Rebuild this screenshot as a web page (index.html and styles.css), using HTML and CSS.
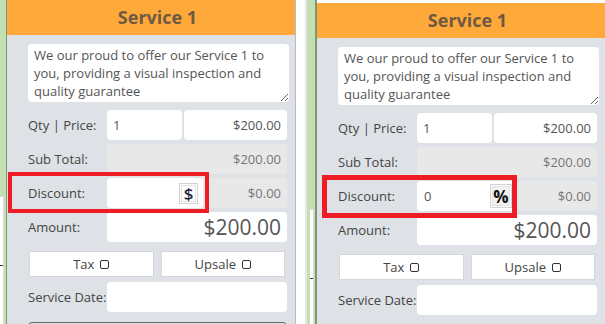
FILE: index.html
```html
<!DOCTYPE html>
<html lang="en">
<head>
  <meta charset="UTF-8" />
  <meta name="viewport" content="width=device-width, initial-scale=1.0"/>
  <title>Service 1 - Discount</title>
  <link rel="stylesheet" href="styles.css">
</head>
<body>
  <div class="shots">

    <section class="shot shot-a">
      <div class="edge">
        <div class="edge-box"><span class="tick"></span></div>
      </div>
      <div class="card">
        <div class="card-head">Service 1</div>
        <textarea class="desc">We our proud to offer our Service 1 to you, providing a visual inspection and quality guarantee</textarea>

        <div class="row first">
          <label>Qty | Price:</label>
          <div class="pair">
            <input class="field" type="text" value="1">
            <input class="field right" type="text" value="$200.00">
          </div>
        </div>
        <div class="row">
          <label>Sub Total:</label>
          <input class="field right" type="text" value="$200.00" disabled>
        </div>
        <div class="row">
          <label>Discount:</label>
          <div class="discount">
            <div class="disc-input">
              <input type="text" value="">
              <button class="unit">$</button>
            </div>
            <div class="disc-value">$0.00</div>
          </div>
        </div>
        <div class="row">
          <label>Amount:</label>
          <input class="field right big" type="text" value="$200.00">
        </div>

        <div class="toggles">
          <div class="toggle">Tax <span class="box"></span></div>
          <div class="toggle">Upsale <span class="box"></span></div>
        </div>

        <div class="row date">
          <label>Service Date:</label>
          <input class="field" type="text" value="">
        </div>
        <div class="next"></div>

        <div class="mark mark-a"></div>
      </div>
      <div class="gutter"></div>
    </section>

    <section class="shot shot-b">
      <div class="edge">
        <div class="edge-box"><span class="tick"></span></div>
      </div>
      <div class="card">
        <div class="card-head">Service 1</div>
        <textarea class="desc">We our proud to offer our Service 1 to you, providing a visual inspection and quality guarantee</textarea>

        <div class="row first">
          <label>Qty | Price:</label>
          <div class="pair">
            <input class="field" type="text" value="1">
            <input class="field right" type="text" value="$200.00">
          </div>
        </div>
        <div class="row">
          <label>Sub Total:</label>
          <input class="field right" type="text" value="$200.00" disabled>
        </div>
        <div class="row">
          <label>Discount:</label>
          <div class="discount">
            <div class="disc-input">
              <input type="text" value="0">
              <button class="unit pct">%</button>
            </div>
            <div class="disc-value">$0.00</div>
          </div>
        </div>
        <div class="row">
          <label>Amount:</label>
          <input class="field right big" type="text" value="$200.00">
        </div>

        <div class="toggles">
          <div class="toggle">Tax <span class="box"></span></div>
          <div class="toggle">Upsale <span class="box"></span></div>
        </div>

        <div class="row date">
          <label>Service Date:</label>
          <input class="field" type="text" value="">
        </div>
        <div class="next"></div>

        <div class="mark mark-b"></div>
      </div>
    </section>

  </div>
</body>
</html>
```

FILE: styles.css
```css
body {
  margin: 0;
  background: #fff;
  font-family: 'Open Sans', 'Noto Sans', sans-serif;
  font-size: 13px;
  color: #444;
  overflow: hidden;
}

.shots {
  display: flex;
  height: 324px;
  overflow: hidden;
}

.shot {
  display: flex;
  flex-shrink: 0;
  height: 324px;
}

/* green page edge on the left of each capture */
.edge {
  display: flex;
  flex-direction: column;
  justify-content: flex-end;
  background: #c4e0b2;
}

.shot-a .edge {
  width: 6px;
  border-right: 1px solid #7d9875;
}

.shot-b .edge {
  width: 8px;
  border-left: 2px solid #e4e6e8;
  border-right: 2px solid #7d9875;
}

.edge-box {
  position: relative;
  height: 127px;
  width: 3px;
  background: #fff;
  border-top: 1px solid #dcdcdc;
  border-right: 1px solid #dcdcdc;
}

.shot-b .edge-box {
  height: 114px;
  margin-left: 3px;
}

.tick {
  position: absolute;
  left: 0;
  top: 68px;
  width: 3px;
  height: 1px;
  background: #333;
}

.gutter {
  width: 9px;
  background: #fff;
}

.card {
  position: relative;
  width: 259px;
  padding: 0 8px 0 21px;
  background: #dee2e6;
  border-right: 1px solid #b8bcc0;
}

.shot-b .card {
  margin-top: 3px;
  border-right: none;
}

.card-head {
  margin: 0 -8px 0 -21px;
  padding: 0 8px 0 21px;
  height: 35px;
  line-height: 35px;
  background: #ffa93b;
  color: #6e5a42;
  font-size: 18px;
  font-weight: 700;
  text-align: center;
}

.desc {
  display: block;
  box-sizing: border-box;
  width: 261px;
  height: 58px;
  margin-top: 9px;
  padding: 2px 6px;
  border: none;
  border-radius: 4px;
  background: #fff;
  font-family: inherit;
  font-size: 13px;
  line-height: 18px;
  color: #555;
  resize: vertical;
  overflow: hidden;
}

.row {
  display: grid;
  grid-template-columns: 79px 1fr;
  align-items: center;
  height: 30px;
  margin-top: 4px;
}

.row.first {
  margin-top: 8px;
}

.row.date {
  margin-top: 5px;
}

.row label {
  color: #444;
  white-space: nowrap;
}

.pair {
  display: grid;
  grid-template-columns: 75px 1fr;
  gap: 2px;
  height: 30px;
}

.field {
  box-sizing: border-box;
  width: 100%;
  height: 30px;
  padding: 0 6px;
  border: none;
  border-radius: 4px;
  background: #fff;
  font-family: inherit;
  font-size: 13px;
  color: #555;
}

.field.right {
  text-align: right;
}

.field:disabled {
  background: #e8e8e8;
  color: #777;
}

.field.big {
  font-size: 21px;
}

.discount {
  display: flex;
  height: 30px;
  border-radius: 4px;
  background: #e8e8e8;
}

.disc-input {
  display: flex;
  align-items: center;
  width: 96px;
  padding-right: 5px;
  box-sizing: border-box;
  border-radius: 4px;
  background: #fff;
}

.disc-input input {
  flex: 1;
  min-width: 0;
  height: 28px;
  padding: 0 7px;
  border: none;
  background: transparent;
  font-family: inherit;
  font-size: 13px;
  color: #555;
}

.unit {
  width: 19px;
  height: 21px;
  padding: 0;
  border: 1px solid #d2d2d2;
  box-shadow: inset 0 0 0 1px #fff, inset 0 0 0 2px #e2e2e2;
  background: #fff;
  font-family: inherit;
  font-size: 17px;
  font-weight: 600;
  line-height: 1;
  color: #1c2a40;
}

.unit.pct {
  width: 22px;
  height: 24px;
  margin-right: -4px;
  background: #f2f2f2;
  font-weight: 700;
  color: #111;
}

.disc-value {
  flex: 1;
  padding-right: 6px;
  line-height: 30px;
  text-align: right;
  color: #777;
}

.toggles {
  display: grid;
  grid-template-columns: 1fr 1fr;
  gap: 7px;
  margin: 9px 2px 0 1px;
}

.toggle {
  display: flex;
  align-items: center;
  justify-content: center;
  height: 24px;
  border: 1px solid #d6d6d6;
  box-shadow: inset 0 0 0 1px #fff;
  background: #fff;
  color: #444;
}

.box {
  display: inline-block;
  width: 7px;
  height: 7px;
  margin-left: 6px;
  border: 1px solid #333;
  border-radius: 2px;
}

.next {
  height: 20px;
  margin-top: 10px;
  border: 1px solid #666;
  border-radius: 4px 4px 0 0;
  background: #dee2e6;
}

/* red annotation frames drawn over the screenshot */
.mark {
  position: absolute;
  border: 4px solid #ee1c25;
  pointer-events: none;
}

.mark-a {
  left: 1px;
  top: 172px;
  width: 193px;
  height: 33px;
}

.mark-b {
  left: 5px;
  top: 172px;
  border-width: 5px;
  width: 185px;
  height: 33px;
}
```
